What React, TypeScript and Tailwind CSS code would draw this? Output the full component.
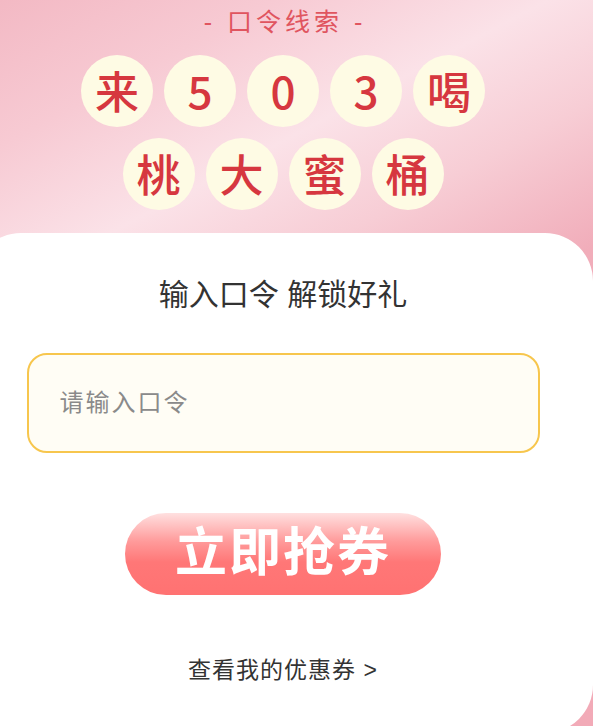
import React from "react";

const row1 = ["来", "5", "0", "3", "喝"];
const row2 = ["桃", "大", "蜜", "桶"];

function Bubble({ ch }: { ch: string }) {
  return (
    <div
      className="w-[72px] h-[72px] rounded-full bg-[#fefbe4] flex items-center justify-center text-[44px] leading-none text-[#d6373f] font-medium"
      style={{ fontFamily: '"Noto Sans CJK SC", "Liberation Sans", sans-serif' }}
    >
      <span className="-mt-[2px]">{ch}</span>
    </div>
  );
}

export default function App() {
  return (
    <div
      className="relative w-[593px] h-[726px] overflow-hidden bg-[linear-gradient(152deg,#f3b9c4_0%,#f7cad3_14%,#fbe2e8_28%,#f7cdd5_40%,#f1adba_54%,#f2aab7_100%)]"
      style={{ fontFamily: '"Liberation Sans", "Noto Sans CJK SC", sans-serif' }}
    >
      <div className="relative w-[620px] ml-[-27px] flex flex-col items-center">
        <div className="pt-[6px] h-[38px] text-[25px] leading-[32px] text-[#e0555f] tracking-[4px] pl-[4px]">
          - 口令线索 -
        </div>
        <div className="mt-[17px] flex flex-col items-center gap-[11px]">
          <div className="flex gap-[11px]">
            {row1.map((c, i) => (
              <Bubble key={i} ch={c} />
            ))}
          </div>
          <div className="flex gap-[11px]">
            {row2.map((c, i) => (
              <Bubble key={i} ch={c} />
            ))}
          </div>
        </div>
        <div className="mt-[23px] w-full h-[500px] rounded-[48px] bg-white flex flex-col items-center">
          <div className="mt-[42px] text-[30px] leading-[40px] text-[#333333]">
            输入口令 解锁好礼
          </div>
          <div className="mt-[38px] w-[513px] h-[100px] rounded-[20px] border-2 border-[#f7c64d] bg-[#fffdf5] flex items-center pl-[31px]">
            <span className="text-[24px] tracking-[2px] text-[#8a8a8a]">请输入口令</span>
          </div>
          <div className="mt-[60px] w-[316px] h-[82px] rounded-full bg-[linear-gradient(180deg,#ffe0e0_0%,#ff9a9a_35%,#ff7777_60%,#ff7272_100%)] flex items-center justify-center">
            <span className="text-[52px] leading-none font-bold text-white tracking-[2px] -mt-[2px]">
              立即抢券
            </span>
          </div>
          <div className="mt-[60px] text-[23px] leading-[30px] tracking-[1px] text-[#333333]">
            查看我的优惠券 &gt;
          </div>
        </div>
      </div>
    </div>
  );
}
